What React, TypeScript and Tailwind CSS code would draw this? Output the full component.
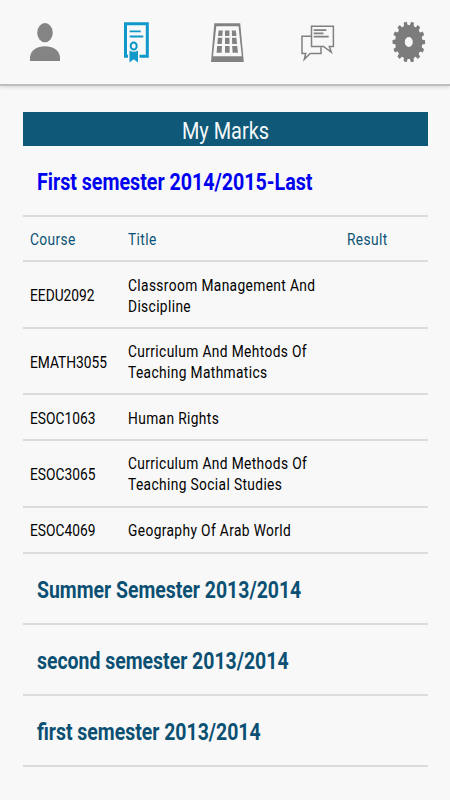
const courses = [
  { code: "EEDU2092", title: ["Classroom Management And", "Discipline"], size: "h-[67px] pt-[2px]" },
  { code: "EMATH3055", title: ["Curriculum And Mehtods Of", "Teaching Mathmatics"], size: "h-[66px] pt-[2px]" },
  { code: "ESOC1063", title: ["Human Rights"], size: "h-[46px] pt-[2px]" },
  { code: "ESOC3065", title: ["Curriculum And Methods Of", "Teaching Social Studies"], size: "h-[67px] pt-px" },
  { code: "ESOC4069", title: ["Geography Of Arab World"], size: "h-[46px]" },
];

const semesters = [
  "Summer Semester 2013/2014",
  "second semester 2013/2014",
  "first semester 2013/2014",
];

export default function App() {
  return (
    <div className="h-[800px] w-[450px] overflow-hidden bg-[#f8f8f8] font-['Roboto','Liberation_Sans',sans-serif]">
      <TopNav />
      <main className="px-[22.5px] pt-[26px]">
        <h1 className="flex h-[34px] items-center justify-center bg-[#0f5877] pt-[3px] text-2xl text-[#f4f8fa]">
          <span className="scale-x-[0.83] whitespace-nowrap">My Marks</span>
        </h1>
        <SemesterRow name="First semester 2014/2015-Last" look="scale-x-[0.818] text-[#0000f0]" />
        <div className="grid h-[45px] grid-cols-[98.5px_218.5px_1fr] items-center border-b-2 border-[#dcdcdc] pl-[7px] pt-[2px] text-[17px] tracking-[0.45px] text-[#0b5375]">
          <Cell>Course</Cell>
          <Cell>Title</Cell>
          <Cell>Result</Cell>
        </div>
        {courses.map((course) => (
          <div
            key={course.code}
            className={`grid grid-cols-[98.5px_1fr] items-center border-b-2 border-[#dcdcdc] pl-[7px] text-[17px] text-black ${course.size}`}
          >
            <Cell>{course.code}</Cell>
            <div className="tracking-[0.45px]">
              {course.title.map((line) => (
                <Cell key={line}>{line}</Cell>
              ))}
            </div>
          </div>
        ))}
        {semesters.map((name) => (
          <SemesterRow key={name} name={name} look="scale-x-[0.81] text-[#0b5073]" />
        ))}
      </main>
    </div>
  );
}

function Cell({ children }: { children: React.ReactNode }) {
  return (
    <div className="origin-left scale-x-[0.81] whitespace-nowrap leading-[21px]">{children}</div>
  );
}

function SemesterRow({ name, look }: { name: string; look: string }) {
  return (
    <div className="flex h-[71px] items-center border-b-2 border-[#dcdcdc] pl-[14px] pt-[2px] text-2xl font-bold">
      <span className={`origin-left whitespace-nowrap ${look}`}>{name}</span>
    </div>
  );
}

function TopNav() {
  return (
    <nav className="flex h-[86px] gap-[51px] border-b-2 border-[#bebebe] pl-[25px] pt-[17px] shadow-[0_2px_3px_rgba(0,0,0,0.1)]">
      <svg className="h-[50px] w-10 shrink-0" viewBox="25 17 40 50" fill="#848484">
        <ellipse cx="45" cy="32.7" rx="7.8" ry="9.6" />
        <path d="M30 61V57C31 50 37 46.3 45 46.3S59 50 60 57V61Z" />
      </svg>
      <svg className="h-[50px] w-10 shrink-0" viewBox="116 17 40 50" fill="none" stroke="#0f98c9">
        <path d="M128 56.3H125.5V23.8H147.3V56.3H139.5" strokeWidth="3" />
        <path d="M129.7 31.3H140.7M129.7 36.5H143.3" strokeWidth="1.8" />
        <ellipse cx="133.7" cy="46" rx="3" ry="3.6" strokeWidth="2" />
        <path d="M129.5 50.5Q133.7 53 138 50.5V62.5L133.7 59.3L129.5 62.5Z" fill="#0f98c9" stroke="none" />
      </svg>
      <svg className="h-[50px] w-10 shrink-0" viewBox="207 17 40 50" fill="#828282">
        <path fillRule="evenodd" d="M214.3 23.3H240.2L243.8 62H211ZM216.3 26.3L213 56.3H241.8L238.5 26.3Z" />
        <path d="M218.7 30.5H222.8L222.3 36H218ZM225 30.5H229.4V36H225ZM231.8 30.5H235.8L236.5 36H232ZM217.9 37.8H222.3L221.8 44H217.3ZM225 37.8H229.5V44H225ZM232 37.8H236.4L237 44H232.2ZM217.1 46H222L221.6 52.7H216.6ZM225 46H229.6V52.7H225ZM232.2 46H237.2L238 52.7H232.6Z" />
      </svg>
      <svg className="h-[50px] w-10 shrink-0" viewBox="298 17 40 50" fill="none" stroke="#808080" strokeWidth="1.5">
        <path d="M311 36.2H302V53.5H305.7L304.3 59.3L310.2 53.5H321V47.3" />
        <path d="M311.5 26.2H333.4V46.5H329.3L331.3 52.3L323.5 46.5H311.5Z" />
        <path d="M313.7 30.2H326.3M313.7 33.4H323.5M313.7 36.6H328.7" strokeWidth="1.7" />
      </svg>
      <Gear />
    </nav>
  );
}

function Gear() {
  const teeth = Array.from({ length: 14 }, (_, i) => (i * 360) / 14 + 13);
  return (
    <svg className="h-[50px] w-10 shrink-0" viewBox="389 17 40 50">
      <g transform="translate(408.8 42) scale(0.8 1)" fill="#7c7c7c">
        {teeth.map((angle) => (
          <path key={angle} d="M-2.6 -15H2.6L1.9 -20.3H-1.9Z" transform={`rotate(${angle})`} />
        ))}
        <path fillRule="evenodd" d="M0 -17A17 17 0 1 1 0 17A17 17 0 1 1 0 -17ZM0 -5A5 5 0 1 0 0 5A5 5 0 1 0 0 -5Z" />
      </g>
    </svg>
  );
}
